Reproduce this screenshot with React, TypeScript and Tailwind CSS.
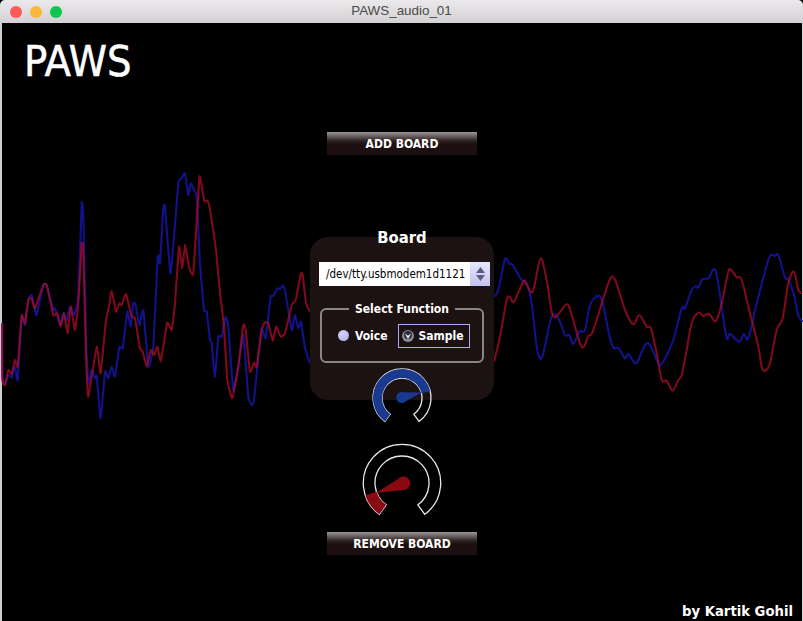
import React from "react";

const blueL = [7,460,7,620,15,645,25,615,35,622,45,590,53,630,65,440,75,465,85,390,95,375,105,420,110,435,130,345,140,345,160,420,165,415,180,465,190,430,200,450,210,410,222,435,235,380,245,100,250,140,258,500,265,640,275,600,285,625,290,620,302,745,315,605,325,625,335,590,345,620,358,530,368,535,382,425,392,470,400,400,407,405,418,465,430,420,445,590,460,530,473,260,480,280,490,115,495,110,512,310,535,40,545,25,555,10,565,75,572,40,580,55,590,80,600,280,612,420,620,425,630,510,635,520,645,620,655,500,665,500,677,440,685,470,695,610,700,660,715,590,730,495,745,680,755,705,762,690,775,560,785,475,797,505,812,380,820,378,832,355,840,357,848,347,855,360,875,480,885,435,895,475,903,455,915,535,930,580];
const redL = [7,460,7,630,15,645,25,600,35,612,45,570,53,590,65,435,75,460,85,390,95,385,105,415,130,345,140,345,160,435,172,430,182,470,192,430,203,490,212,410,225,480,235,400,245,220,250,250,258,560,265,680,290,530,302,610,318,450,325,420,335,362,348,425,358,400,365,405,378,372,395,440,405,445,420,535,428,545,440,590,452,540,462,555,472,530,482,575,490,530,502,458,515,480,525,400,537,230,547,295,555,225,567,290,580,310,598,25,603,35,613,93,622,92,630,120,648,240,660,370,672,470,682,630,697,685,715,590,730,465,737,480,750,605,762,578,770,590,785,480,795,457,805,460,818,512,828,470,842,500,855,490,875,405,887,390,903,310,908,315,918,400,930,425];
const blueR = [12,170,25,150,45,58,58,72,68,75,95,120,110,130,125,190,140,320,150,355,160,340,185,230,205,235,225,285,238,285,250,312,268,275,285,270,300,195,325,167,338,190,360,295,372,325,385,323,405,355,415,343,435,370,445,360,462,320,475,310,490,335,508,375,525,355,550,300,575,205,585,205,605,150,618,138,625,143,637,118,655,115,670,88,680,105,695,200,710,295,720,282,748,305,762,282,775,295,800,190,835,60,848,45,855,48,865,45,885,112,895,118,912,165,925,225,937,245];
const redR = [12,365,30,290,50,180,60,172,72,185,100,125,108,130,125,158,135,130,152,55,170,120,185,215,198,230,230,193,245,225,270,310,282,320,295,288,305,282,320,240,355,130,373,115,405,210,430,253,448,225,470,260,483,265,500,340,515,420,530,422,548,452,565,420,575,405,590,330,605,250,625,218,640,228,657,222,678,243,695,190,715,95,725,92,740,112,755,120,780,220,805,320,815,380,825,392,840,370,860,270,878,235,895,130,912,95,925,150,937,158];

function smooth(raw: number[], ox: number, oy: number, k: number) {
  const pts: [number, number][] = [];
  for (let i = 0; i < raw.length; i += 2) pts.push([raw[i] / 3 + ox, raw[i + 1] / 3 + oy]);
  let d = `M${pts[0][0].toFixed(1)} ${pts[0][1].toFixed(1)}`;
  for (let i = 0; i < pts.length - 1; i++) {
    const p0 = pts[Math.max(0, i - 1)];
    const p1 = pts[i];
    const p2 = pts[i + 1];
    const p3 = pts[Math.min(pts.length - 1, i + 2)];
    const c1x = p1[0] + (p2[0] - p0[0]) * k;
    const c1y = p1[1] + (p2[1] - p0[1]) * k;
    const c2x = p2[0] - (p3[0] - p1[0]) * k;
    const c2y = p2[1] - (p3[1] - p1[1]) * k;
    d += `C${c1x.toFixed(1)} ${c1y.toFixed(1)} ${c2x.toFixed(1)} ${c2y.toFixed(1)} ${p2[0].toFixed(1)} ${p2[1].toFixed(1)}`;
  }
  return d;
}

function wavePath(left: number[], right: number[]) {
  return smooth(left, 0, 170, 0.06) + smooth(right, 490, 240, 0.16);
}

function polar(cx: number, cy: number, r: number, deg: number): [number, number] {
  const a = (deg * Math.PI) / 180;
  return [cx + r * Math.sin(a), cy - r * Math.cos(a)];
}

function ring(cx: number, cy: number, R: number, r: number, a0: number, a1: number) {
  const large = a1 - a0 > 180 ? 1 : 0;
  const o0 = polar(cx, cy, R, a0);
  const o1 = polar(cx, cy, R, a1);
  const i0 = polar(cx, cy, r, a0);
  const i1 = polar(cx, cy, r, a1);
  return `M${o0[0]} ${o0[1]}A${R} ${R} 0 ${large} 1 ${o1[0]} ${o1[1]}L${i1[0]} ${i1[1]}A${r} ${r} 0 ${large} 0 ${i0[0]} ${i0[1]}Z`;
}

function Gauge(props: { size: number; cx: number; cy: number; R: number; r: number; to: number; hx: number; hy: number; hub: number; tip: [number, number]; color: string }) {
  const { size, cx, cy, R, r, to, hx, hy, hub, tip, color } = props;
  const dx = tip[0] - hx;
  const dy = tip[1] - hy;
  const len = Math.hypot(dx, dy);
  const nx = (-dy / len) * hub;
  const ny = (dx / len) * hub;
  return (
    <svg width={size} height={size} viewBox={`0 0 ${size} ${size}`} className="relative block shrink-0">
      <path d={ring(cx, cy, R, r, -144, 144)} fill="none" stroke="#e8e8e8" strokeWidth="1.3" />
      <path d={ring(cx, cy, R, r, -144, to)} fill={color} />
      <circle cx={hx} cy={hy} r={hub} fill={color} />
      <polygon points={`${hx + nx},${hy + ny} ${tip[0]},${tip[1]} ${hx - nx},${hy - ny}`} fill={color} />
    </svg>
  );
}

function MetalButton({ label }: { label: string }) {
  return (
    <button className="flex h-[23px] w-[150px] shrink-0 items-center justify-center bg-[linear-gradient(to_bottom,#9c9898_0%,#6e6666_16%,#2e2222_38%,#1e1010_52%,#1c0f0f_100%)] text-[12px] font-bold text-white">
      {label}
    </button>
  );
}

export default function App() {
  return (
    <div className="relative flex h-[621px] w-[803px] flex-col overflow-hidden bg-black font-['DejaVu_Sans_Condensed','DejaVu_Sans',sans-serif]">
      <div className="relative flex h-[23px] shrink-0 items-center justify-center rounded-t-[5px] bg-[linear-gradient(to_bottom,#ebe9eb,#d3d1d3)]">
        <div className="absolute left-[10px] top-[6px] flex gap-[8px]">
          <span className="h-[12px] w-[12px] rounded-full bg-[#fc5a55]" />
          <span className="h-[12px] w-[12px] rounded-full bg-[#fdb83c]" />
          <span className="h-[12px] w-[12px] rounded-full bg-[#0cc850]" />
        </div>
        <span className="font-['Liberation_Sans',sans-serif] text-[13.4px] text-[#4a4a4a]">PAWS_audio_01</span>
      </div>

      <div className="relative flex flex-1 flex-col border-l-[2px] border-r border-l-[#cfcfcf] border-r-[#d8d8d8] bg-black">
        <svg className="absolute left-[-2px] top-[-23px]" width="803" height="621" viewBox="0 0 803 621">
          <path d={wavePath(blueL, blueR)} fill="none" stroke="#12128a" strokeWidth="2.1" strokeLinejoin="round" />
          <path d={wavePath(redL, redR)} fill="none" stroke="#b00c28" strokeOpacity="0.72" strokeWidth="2.1" strokeLinejoin="round" />
        </svg>

        <h1 className="relative mt-[12px] ml-[22px] h-[51px] text-[43px] leading-[52px] font-normal text-white [-webkit-text-stroke:0.5px_white]">PAWS</h1>

        <div className="relative mt-[46px] ml-[308px] flex w-[184px] flex-col items-center">
          <MetalButton label="ADD BOARD" />

          <div className="mt-[82px] h-[163px] w-[184px] shrink-0 rounded-[18px] bg-[#1b1211]">
            <div className="mt-[-11px] h-[23px] text-center text-[16.5px] leading-[24px] font-bold text-white">Board</div>

            <div className="mt-[13px] ml-[9px] flex h-[24px] w-[171px] bg-white">
              <div className="flex-1 pl-[7px] text-[11.5px] leading-[24px] text-black">/dev/tty.usbmodem1d1121</div>
              <div className="flex w-[20px] flex-col items-center justify-center gap-[2px] bg-[linear-gradient(to_bottom,#e6e6fb,#c2c2f0)]">
                <svg width="9" height="6" viewBox="0 0 9 6"><polygon points="4.5,0 9,6 0,6" fill="#5c5c80" /></svg>
                <svg width="9" height="6" viewBox="0 0 9 6"><polygon points="0,0 9,0 4.5,6" fill="#5c5c80" /></svg>
              </div>
            </div>

            <fieldset className="mt-[16px] ml-[10px] h-[61px] w-[164px] rounded-[6px] border-[2px] border-[#8a8686]">
              <legend className="mx-auto px-[6px] text-[12px] leading-[14px] font-bold text-white">Select Function</legend>
              <div className="flex h-[39px] items-center pl-[16px]">
                <span className="h-[11px] w-[11px] rounded-full bg-[radial-gradient(circle_at_40%_35%,#d4d4fa,#a8a8ee)]" />
                <span className="ml-[6px] text-[12px] font-bold text-white">Voice</span>
                <div className="ml-[10px] flex h-[24px] w-[72px] items-center border border-[#a9a9ee] pl-[3px]">
                  <svg width="12" height="12" viewBox="0 0 12 12">
                    <circle cx="6" cy="6" r="6" fill="#8a8a9c" />
                    <circle cx="6" cy="5" r="4" fill="#2a2a38" />
                    <path d="M2.8 3.4L6 9L9.2 3.4L6 5.8Z" fill="#f2f2ff" />
                  </svg>
                  <span className="ml-[5px] text-[12px] font-bold text-white">Sample</span>
                </div>
              </div>
            </fieldset>
          </div>

          <div className="mt-[-33px]">
            <Gauge size={64} cx={32} cy={31} R={29} r={20} to={76.5} hx={31.7} hy={30.5} hub={5.5} tip={[51.7, 25.5]} color="#1a3a90" />
          </div>
          <div className="mt-[10px]">
            <Gauge size={84} cx={42} cy={42} R={38.7} r={27} to={-109} hx={43.5} hy={42.3} hub={6.8} tip={[16, 52]} color="#8a0a14" />
          </div>
          <div className="mt-[7px]">
            <MetalButton label="REMOVE BOARD" />
          </div>
        </div>

        <div className="relative mt-auto pr-[9px] text-right text-[14.7px] leading-[20px] font-bold text-white">by Kartik Gohil</div>
      </div>
    </div>
  );
}
